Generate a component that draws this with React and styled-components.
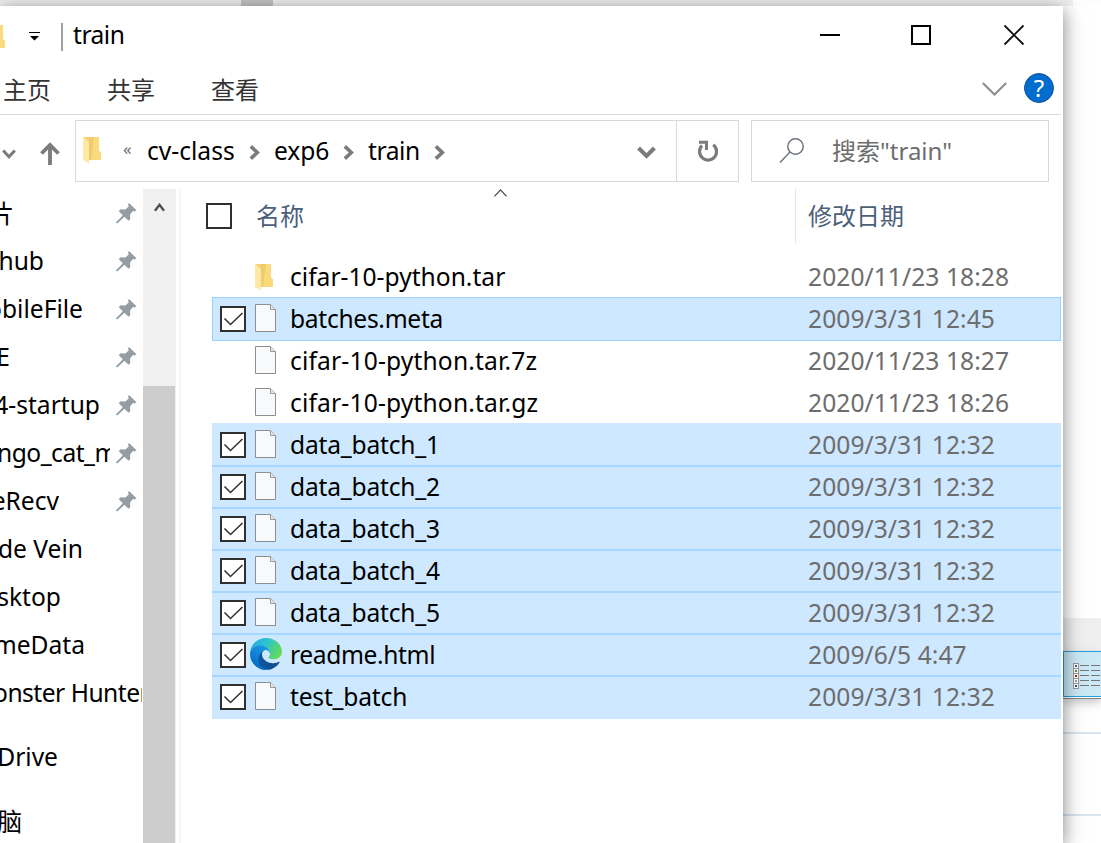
import React from 'react';
import styled, { createGlobalStyle, css } from 'styled-components';

const GlobalStyle = createGlobalStyle`
  * { box-sizing: border-box; }
  body {
    margin: 0;
    background: #fff;
    overflow: hidden;
    font-family: 'Noto Sans', 'Noto Sans CJK SC', sans-serif;
    font-size: 24.6px;
    line-height: 34px;
    color: #000;
  }
  svg { display: block; flex: none; }
`;

const Desktop = styled.div`
  width: 1101px;
  height: 843px;
  overflow: hidden;
  display: flex;
  flex-direction: column;
`;

const TopStrip = styled.div`
  height: 6px;
  flex: none;
  display: flex;
  padding-left: 241px;
  background: #f0f0f0;
  border-right: 28px solid #fdfdfd;
`;

const TopThumb = styled.div`
  width: 32px;
  height: 6px;
  background: #c6c6c6;
`;

const Stage = styled.div`
  flex: 1;
  min-height: 0;
  display: flex;
`;

const Window = styled.main`
  position: relative;
  z-index: 1;
  width: 1063px;
  flex: none;
  display: flex;
  flex-direction: column;
  background: #fff;
  box-shadow: 0 4px 18px rgba(0, 0, 0, 0.5);
`;

const Backdrop = styled.aside`
  flex: 1;
  display: flex;
  flex-direction: column;
  padding-top: 612px;
`;

const BackBar = styled.div`
  height: 33px;
  background: #efefef;
`;

const BackButton = styled.div`
  height: 46px;
  padding: 11px 0 0 9px;
  background: #cbe8f6;
  border: 1px solid #26a0da;
  border-right: 0;
  box-shadow: 0 1px #fff, 0 2px #858585, 0 5px 10px rgba(0, 0, 0, 0.25);
`;

const BackLine = styled.div`
  height: 2px;
  margin-top: ${(p) => p.$gap}px;
  background: #d8e6f2;
`;

const TitleBar = styled.header`
  height: 58px;
  display: flex;
  align-items: center;
  flex: none;
`;

const TitleDivider = styled.div`
  width: 2px;
  height: 28px;
  margin: 3px 10px 0 19px;
  background: #a0a0a0;
`;

const Title = styled.h1`
  margin: 0;
  font-size: inherit;
  font-weight: 400;
  letter-spacing: -0.5px;
`;

const WindowButtons = styled.div`
  margin-left: auto;
  padding-right: 38px;
  display: flex;
  gap: 70px;
`;

const Tabs = styled.nav`
  height: 51px;
  flex: none;
  display: flex;
  align-items: center;
  gap: 56px;
  width: 1061px;
  padding: 0 7px 0 3px;
  border-bottom: 1px solid #dadada;
`;

const Tab = styled.span`
  padding-top: 1px;
  font-size: 24px;
  color: #333;
`;

const TabTools = styled.div`
  margin-left: auto;
  display: flex;
  align-items: center;
  gap: 17px;
`;

const Help = styled.span`
  width: 30px;
  height: 30px;
  margin-top: -3px;
  border: 1px solid #12549b;
  border-radius: 50%;
  background: #006cce;
  color: #fff;
  font-size: 24px;
  line-height: 28px;
  text-align: center;
`;

const NavRow = styled.div`
  height: 62px;
  flex: none;
  display: flex;
  align-items: center;
  margin: 5px 0 7px;
`;

const NavArrows = styled.div`
  width: 75px;
  display: flex;
  align-items: center;
  gap: 24px;
  padding: 5px 0 0 2px;
`;

const Address = styled.div`
  width: 664px;
  height: 62px;
  display: flex;
  align-items: center;
  padding-left: 7px;
  border: 1px solid #d9d9d9;
`;

const More = styled.span`
  width: 20px;
  margin: -4px 4px 0 20px;
  color: #6d6d6d;
  font-size: 17px;
`;

const Crumb = styled.span`
  width: ${(p) => p.$w}px;
  letter-spacing: ${(p) => p.$track || 0}px;
  white-space: nowrap;
`;

const CrumbArrow = styled.span`
  width: ${(p) => p.$w}px;
  padding-top: 2px;
`;

const DropSlot = styled.span`
  margin-left: auto;
  padding: 2px 20px 0 0;
`;

const Refresh = styled.span`
  width: 62px;
  height: 60px;
  display: flex;
  align-items: center;
  justify-content: center;
  border-left: 1px solid #d9d9d9;
`;

const Search = styled.div`
  width: 298px;
  height: 62px;
  margin-left: 12px;
  padding-left: 27px;
  display: flex;
  align-items: center;
  gap: 28px;
  border: 1px solid #d9d9d9;
  color: #6d6d6d;
  font-size: 24px;
`;

const Body = styled.div`
  flex: 1;
  min-height: 0;
  display: flex;
`;

const Sidebar = styled.ul`
  width: 143px;
  margin: 0;
  padding: 0;
  list-style: none;
  overflow: hidden;
`;

const SideItem = styled.li`
  height: 48px;
  margin-bottom: ${(p) => p.$gap || 0}px;
  display: flex;
  align-items: center;
  justify-content: space-between;
  padding-right: 6px;
`;

const SideLabel = styled.span`
  width: ${(p) => p.$end}px;
  flex: none;
  display: flex;
  justify-content: ${(p) => (p.$clip ? 'flex-start' : 'flex-end')};
  padding-top: ${(p) => p.$drop || 0}px;
  text-indent: ${(p) => p.$shift || 0}px;
  letter-spacing: ${(p) => p.$track || 0}px;
  overflow: hidden;
  white-space: nowrap;
`;

const ScrollTrack = styled.div`
  width: 33px;
  background: #f0f0f0;
  display: flex;
  flex-direction: column;
`;

const ScrollUp = styled.div`
  height: 197px;
  flex: none;
  padding: 14px 0 0 11px;
`;

const ScrollThumb = styled.div`
  width: 32px;
  flex: 1;
  background: #cdcdcd;
`;

const Files = styled.section`
  flex: 1;
  margin-left: 3px;
  padding-right: 2px;
  border-left: 2px solid #f5f5f5;
`;

const FilesHeader = styled.div`
  height: 54px;
  display: flex;
  align-items: center;
  padding-left: 25px;
  color: #4c607a;
  font-size: 24px;
`;

const NameHeading = styled.div`
  position: relative;
  flex: 1;
  height: 54px;
  display: flex;
  align-items: center;
  padding-left: 24px;
`;

const SortMark = styled.span`
  position: absolute;
  left: 262px;
  top: 0;
`;

const DateHeading = styled.div`
  width: 266px;
  height: 54px;
  display: flex;
  align-items: center;
  padding-left: 12px;
  border-left: 1px solid #e5e5e5;
`;

const Rows = styled.div`
  margin: 12px 0 0 31px;
`;

const Row = styled.div`
  height: 44px;
  margin-bottom: -2px;
  display: flex;
  align-items: center;
  padding: 0 0 0 8px;
  ${(p) => p.$selected && css`
    background: #cde8ff;
    box-shadow: ${p.$joined ? 'inset 0 2px #a5d7ff' : 'none'};
    position: relative;
  `}
  ${(p) => p.$outlined && css`
    box-shadow: inset 0 0 0 1px #99d1ff;
  `}
`;

const Box = styled.span`
  width: 26px;
  height: 26px;
  flex: none;
  border: 2px solid #303030;
  background: #fff;
  visibility: ${(p) => (p.$hidden ? 'hidden' : 'visible')};
`;

const IconSlot = styled.span`
  width: 32px;
  margin: 0 8px 2px 4px;
  padding-left: ${(p) => (p.$kind === 'edge' ? 0 : 5)}px;
  padding-top: ${(p) => (p.$kind === 'folder' ? 4 : 0)}px;
  display: flex;
  flex: none;
`;

const FileName = styled.span`
  flex: 1;
  letter-spacing: ${(p) => p.$track || 0}px;
`;

const FileDate = styled.span`
  width: 253px;
  color: #6d6d6d;
  letter-spacing: 0.06px;
`;

const Folder = () => (
  <svg width="20" height="28" viewBox="1 1 20 28">
    <path d="M1 1H17V15L19 17V24H1Z" fill="#f5d374" />
    <path d="M7 1H17V15L19 17V24H7Z" fill="#f0cb69" />
    <path d="M12 1H17V15L19 17V24H9Z" fill="#fadb7c" />
    <path d="M1 1L7 6V27.500L1 24Z" fill="#ffe8a6" />
  </svg>
);

const FileIcon = () => (
  <svg width="21" height="28" viewBox="0 0 21 28">
    <path d="M.5.5H15.500L20.500 5.500V27.500H.5Z" fill="#f8f9fa" stroke="#8e8e8e" />
    <path d="M15.500.5V5.500H20.500" fill="#e5e5e5" stroke="#999" />
  </svg>
);

const EdgeIcon = () => (
  <svg width="32" height="32" viewBox="0 0 256 256">
    <defs>
      <linearGradient id="edgeBase" x1="0" y1="0" x2="1" y2="0">
        <stop offset="0" stopColor="#0c59a4" />
        <stop offset="1" stopColor="#114a8b" />
      </linearGradient>
      <linearGradient id="edgeMid" x1=".8" y1="0" x2=".3" y2="1">
        <stop offset="0" stopColor="#1b9de2" />
        <stop offset=".5" stopColor="#1482d8" />
        <stop offset="1" stopColor="#0068c0" />
      </linearGradient>
      <linearGradient id="edgeTop" x1="0" y1=".2" x2="1" y2=".6">
        <stop offset="0" stopColor="#29a9e5" />
        <stop offset=".45" stopColor="#2dc3d0" />
        <stop offset="1" stopColor="#66dc55" />
      </linearGradient>
    </defs>
    <path fill="url(#edgeBase)" d="M231 190.500c-3.400 1.800-6.900 3.400-10.500 4.700a101 101 0 0 1-35.900 6.500c-47.300 0-88.500-32.500-88.500-74.300a31.500 31.500 0 0 1 16.400-27.300c-42.800 1.800-53.800 46.400-53.800 72.500 0 74 68.100 81.400 82.800 81.400 7.900 0 19.800-2.300 27-4.600l1.300-.4a128.300 128.300 0 0 0 66.600-52.800 4 4 0 0 0-5.400-5.700z" />
    <path fill="url(#edgeMid)" d="M105.700 241.400a79.200 79.200 0 0 1-22.700-21.300 80.700 80.700 0 0 1 29.500-120c3.200-1.500 8.500-4.100 15.600-4a32.400 32.400 0 0 1 25.700 13 31.900 31.900 0 0 1 6.300 18.700c0-.2 24.500-79.600-80-79.600-43.900 0-80 41.700-80 78.200a130.200 130.200 0 0 0 12.100 56 128 128 0 0 0 156.400 67 75.500 75.500 0 0 1-62.800-8z" />
    <path fill="url(#edgeTop)" d="M152.300 148.900c-.8 1-3.300 2.500-3.300 5.700 0 2.600 1.700 5.100 4.700 7.200 14.400 10 41.500 8.700 41.600 8.700a59.600 59.600 0 0 0 30.300-8.300A61.400 61.400 0 0 0 256 109.300c.3-22.400-8-37.300-11.300-43.900C223.500 23.900 177.700 0 128 0A128 128 0 0 0 0 126.200c.5-36.500 36.800-66 80-66 3.500 0 23.500.3 42 10a72.600 72.600 0 0 1 30.900 29.300c6.100 10.600 7.200 24.100 7.200 29.500s-2.700 13.300-7.800 19.900z" />
  </svg>
);

const Pin = () => (
  <svg width="21" height="21" viewBox="0 0 21 21" fill="#939da5">
    <path d="M13 0L20.500 7.300L18.500 8.500L17 8L14 11.500L14.300 16L12.500 17.700L8.400 13.700L1.500 20.300H.3V19L6.800 12.300L2.700 8.200L4.500 6.300L9.300 6.500L12.700 3.500L12 1.500Z" />
  </svg>
);

const Chevron = ({ w, h, stroke = '#7b7b7b', sw = 4, dir = 'down' }) => {
  const i = sw / 2;
  const shapes = {
    down: `M${i * 0.8} ${i}L${w / 2} ${h - i * 1.5}L${w - i * 0.8} ${i}`,
    up: `M${i * 0.8} ${h - i}L${w / 2} ${i * 1.5}L${w - i * 0.8} ${h - i}`,
    right: `M${i} ${i * 0.8}L${w - i * 1.5} ${h / 2}L${i} ${h - i * 0.8}`,
  };
  return (
    <svg width={w} height={h} viewBox={`0 0 ${w} ${h}`}>
      <path d={shapes[dir]} fill="none" stroke={stroke} strokeWidth={sw} />
    </svg>
  );
};

const CheckBox = ({ checked, hidden }) => (
  <Box $hidden={hidden}>
    {checked && (
      <svg width="22" height="22" viewBox="0 0 22 22">
        <path d="M2.500 10.500L8.500 16.500L20.500 5" fill="none" stroke="#333" strokeWidth="1.600" />
      </svg>
    )}
  </Box>
);

const sideItems = [
  { label: '片', end: 14, pin: true, drop: 2 },
  { label: 'hub', end: 44, pin: true },
  { label: 'obileFile', end: 83, pin: true },
  { label: 'E', end: 10, pin: true },
  { label: '4-startup', end: 100, pin: true },
  { label: 'ngo_cat_m', end: 110, pin: true, clip: true, shift: -3, track: -0.5 },
  { label: 'eRecv', end: 59, pin: true },
  { label: 'de Vein', end: 83 },
  { label: 'sktop', end: 61 },
  { label: 'meData', end: 85 },
  { label: 'onster Hunter', end: 142, clip: true, shift: -7, track: -0.5, gap: 16 },
  { label: 'Drive', end: 58, gap: 16 },
  { label: '脑', end: 22, drop: 2 },
];

const files = [
  { name: 'cifar-10-python.tar', date: '2020/11/23 18:28', kind: 'folder' },
  { name: 'batches.meta', date: '2009/3/31 12:45', selected: true, outlined: true, track: -0.3 },
  { name: 'cifar-10-python.tar.7z', date: '2020/11/23 18:27', track: 0.16 },
  { name: 'cifar-10-python.tar.gz', date: '2020/11/23 18:26', track: 0.16 },
  { name: 'data_batch_1', date: '2009/3/31 12:32', selected: true, track: -0.2 },
  { name: 'data_batch_2', date: '2009/3/31 12:32', selected: true, track: -0.2 },
  { name: 'data_batch_3', date: '2009/3/31 12:32', selected: true, track: -0.2 },
  { name: 'data_batch_4', date: '2009/3/31 12:32', selected: true, track: -0.2 },
  { name: 'data_batch_5', date: '2009/3/31 12:32', selected: true, track: -0.2 },
  { name: 'readme.html', date: '2009/6/5 4:47', selected: true, kind: 'edge', track: -0.38 },
  { name: 'test_batch', date: '2009/3/31 12:32', selected: true, track: -0.2 },
];

const crumbs = [
  { label: 'cv-class', w: 102, gap: 25 },
  { label: 'exp6', w: 69, track: -0.1, gap: 25 },
  { label: 'train', w: 66, track: -0.45, gap: 24 },
];

const icons = { folder: Folder, edge: EdgeIcon };

const ListGlyph = () => (
  <svg width="28" height="28" viewBox="0 0 28 28">
    <path d="M0 0H6V26H0Z" fill="#999" />
    {['#355e7c', '#788440', '#a33110', '#99a3a8', '#35547a'].map((color, i) => (
      <g key={color}>
        <rect x="1" y={1 + i * 5} width="4" height="4" fill="#fff" />
        <rect x="2" y={2 + i * 5} width="2" height="2" fill={color} />
        <path d={`M7 ${2.5 + i * 5}h9m2 0h9`} stroke="#777" />
      </g>
    ))}
  </svg>
);

export default function App() {
  return (
    <Desktop>
      <GlobalStyle />
      <TopStrip><TopThumb /></TopStrip>
      <Stage>
        <Window>
          <TitleBar>
            <svg width="42" height="26" viewBox="0 0 42 26">
              <path d="M0 3H3V17L5 19V26H0Z" fill="#fadb7c" />
              <path d="M29 10H40V11H29ZM30 14H39L34.500 18.500Z" fill="#000" />
            </svg>
            <TitleDivider />
            <Title>train</Title>
            <WindowButtons>
              <svg width="22" height="22" viewBox="0 0 22 22"><path d="M1 11H21" stroke="#000" strokeWidth="2" /></svg>
              <svg width="22" height="22" viewBox="0 0 22 22"><path d="M1 2H19V20H1Z" fill="none" stroke="#000" strokeWidth="2" /></svg>
              <svg width="22" height="22" viewBox="0 0 22 22"><path d="M1.500 1.500L20.500 20.500M20.500 1.500L1.500 20.500" stroke="#111" strokeWidth="1.800" /></svg>
            </WindowButtons>
          </TitleBar>

          <Tabs>
            <Tab>主页</Tab>
            <Tab>共享</Tab>
            <Tab>查看</Tab>
            <TabTools>
              <Chevron w={25} h={14} sw={2} stroke="#8c8c8c" />
              <Help>?</Help>
            </TabTools>
          </Tabs>

          <NavRow>
            <NavArrows>
              <Chevron w={14} h={10} sw={3} />
              <svg width="20" height="24" viewBox="0 0 20 24">
                <path d="M10 23V4M1.500 11.500L10 3L18.500 11.500" fill="none" stroke="#7b7b7b" strokeWidth="3.800" />
              </svg>
            </NavArrows>
            <Address>
              <Folder />
              <More>«</More>
              {crumbs.map((c) => (
                <React.Fragment key={c.label}>
                  <Crumb $w={c.w} $track={c.track}>{c.label}</Crumb>
                  <CrumbArrow $w={c.gap}><Chevron w={11} h={15} sw={3.6} dir="right" /></CrumbArrow>
                </React.Fragment>
              ))}
              <DropSlot><Chevron w={19} h={13} sw={4} /></DropSlot>
              <Refresh>
                <svg width="22" height="24" viewBox="0 0 22 24" fill="none" stroke="#7b7b7b">
                  <path d="M16.200 5.800A8.500 8.500 0 1 1 5 6.600" strokeWidth="3.200" />
                  <path d="M2 3.200H9.500V11" strokeWidth="3" />
                </svg>
              </Refresh>
            </Address>
            <Search>
              <svg width="25" height="26" viewBox="0 0 25 26" fill="none" stroke="#6f7680" strokeWidth="1.500">
                <circle cx="16.500" cy="8.500" r="7.700" />
                <path d="M11 14L1 24.500" />
              </svg>
              <span>搜索"train"</span>
            </Search>
          </NavRow>

          <Body>
            <Sidebar>
              {sideItems.map((s) => (
                <SideItem key={s.label} $gap={s.gap}>
                  <SideLabel $end={s.end} $clip={s.clip} $shift={s.shift} $track={s.track} $drop={s.drop}>
                    {s.label}
                  </SideLabel>
                  {s.pin && <Pin />}
                </SideItem>
              ))}
            </Sidebar>
            <ScrollTrack>
              <ScrollUp><Chevron w={11} h={9} sw={2.4} dir="up" stroke="#505050" /></ScrollUp>
              <ScrollThumb />
            </ScrollTrack>
            <Files>
              <FilesHeader>
                <CheckBox />
                <NameHeading>
                  名称
                  <SortMark><Chevron w={13} h={8} sw={1.2} dir="up" stroke="#444" /></SortMark>
                </NameHeading>
                <DateHeading>修改日期</DateHeading>
              </FilesHeader>
              <Rows>
                {files.map((f, i) => {
                  const Icon = icons[f.kind] || FileIcon;
                  const joined = f.selected && files[i - 1]?.selected;
                  return (
                    <Row key={f.name} $selected={f.selected} $joined={joined} $outlined={f.outlined}>
                      <CheckBox checked={f.selected} hidden={!f.selected} />
                      <IconSlot $kind={f.kind}><Icon /></IconSlot>
                      <FileName $track={f.track}>{f.name}</FileName>
                      <FileDate>{f.date}</FileDate>
                    </Row>
                  );
                })}
              </Rows>
            </Files>
          </Body>
        </Window>
        <Backdrop>
          <BackBar />
          <BackButton><ListGlyph /></BackButton>
          <BackLine $gap={35} />
          <BackLine $gap={80} />
        </Backdrop>
      </Stage>
    </Desktop>
  );
}
